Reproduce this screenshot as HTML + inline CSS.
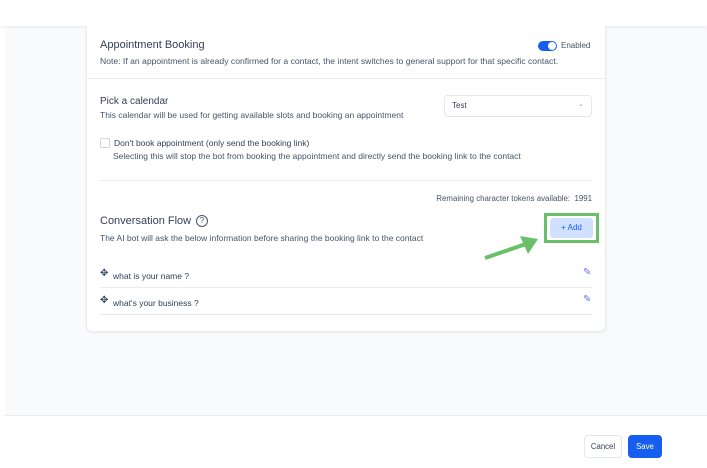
<!DOCTYPE html>
<html><head><style>
*{box-sizing:border-box;margin:0;padding:0}
body{width:707px;height:468px;background:#fff;font-family:"Liberation Sans",sans-serif;position:relative;overflow:hidden;color:#344054}
.abs{position:absolute}
.t{position:absolute;white-space:nowrap}
.s{font-size:8.5px;color:#475467}
</style></head><body>
<div class="abs" style="left:5px;top:26px;width:702px;height:390px;background:#f9fafb;border-bottom:1px solid #eaecf0"></div>
<div class="abs" style="left:0;top:0;width:707px;height:26px;background:#fff;box-shadow:0 1px 3px rgba(0,0,0,0.08)"></div>
<div class="abs" style="left:86px;top:26px;width:520px;height:306px;background:#fff;border:1px solid #eaecf0;border-top:none;border-radius:0 0 6px 6px;box-shadow:0 1px 2px rgba(0,0,0,0.06)"></div>
<div class="abs" style="left:87px;top:78px;width:518px;height:1px;background:#eaecf0"></div>
<div class="t" style="left:100px;top:39px;font-size:11px;color:#344054">Appointment Booking</div>
<div class="t s" style="left:100px;top:56px;font-size:8.6px">Note: If an appointment is already confirmed for a contact, the intent switches to general support for that specific contact.</div>
<div class="abs" style="left:538px;top:41px;width:19px;height:10px;border-radius:5px;background:#155eef"></div>
<div class="abs" style="left:548px;top:42px;width:8px;height:8px;border-radius:50%;background:#fff"></div>
<div class="t" style="left:561px;top:41px;font-size:8px;color:#475467">Enabled</div>
<div class="t" style="left:100px;top:96px;font-size:10px;color:#344054">Pick a calendar</div>
<div class="t s" style="left:100px;top:110px">This calendar will be used for getting available slots and booking an appointment</div>
<div class="abs" style="left:444px;top:95px;width:148px;height:22px;border:1px solid #e4e7ec;border-radius:4px"></div>
<div class="t" style="left:452px;top:101px;font-size:8px;color:#344054">Test</div>
<div class="t" style="left:578px;top:100px;font-size:7px;color:#98a2b3">⌄</div>
<div class="abs" style="left:100px;top:138px;width:10px;height:10px;border:1px solid #d0d5dd;border-radius:2px"></div>
<div class="t s" style="left:114px;top:138px;color:#344054">Don't book appointment (only send the booking link)</div>
<div class="t s" style="left:113px;top:151px">Selecting this will stop the bot from booking the appointment and directly send the booking link to the contact</div>
<div class="abs" style="left:100px;top:180px;width:492px;height:1px;background:#eaecf0"></div>
<div class="t s" style="right:115px;top:194px;font-size:7.9px">Remaining character tokens available:&nbsp; 1991</div>
<div class="t" style="left:100px;top:215px;font-size:11px;color:#344054">Conversation Flow</div>
<div class="abs" style="left:196px;top:215px;width:12px;height:12px;border:1px solid #475467;border-radius:50%;font-size:8px;text-align:center;line-height:10px;color:#475467">?</div>
<div class="t s" style="left:100px;top:233px">The AI bot will ask the below information before sharing the booking link to the contact</div>
<div class="abs" style="left:544px;top:213px;width:55px;height:30px;border:3px solid #6abf69;"></div>
<div class="abs" style="left:550px;top:218px;width:43px;height:20px;background:#d1e0ff;border-radius:3px;color:#155eef;font-size:8px;text-align:center;line-height:20px">+ Add</div>
<svg class="abs" style="left:482px;top:232px" width="62" height="30"><path d="M3 26 L44 12" stroke="#6abf69" stroke-width="4"/><polygon points="38,4 56,7 46,22" fill="#6abf69"/></svg>
<div class="t" style="left:100px;top:268px;font-size:10px;color:#344054">✥</div>
<div class="t s" style="left:113px;top:271px;color:#344054">what is your name ?</div>
<div class="t" style="left:583px;top:267px;font-size:10px;color:#6172f3">✎</div>
<div class="abs" style="left:100px;top:287px;width:492px;height:1px;background:#eaecf0"></div>
<div class="t" style="left:100px;top:295px;font-size:10px;color:#344054">✥</div>
<div class="t s" style="left:113px;top:298px;color:#344054">what's your business ?</div>
<div class="t" style="left:583px;top:294px;font-size:10px;color:#6172f3">✎</div>
<div class="abs" style="left:100px;top:314px;width:492px;height:1px;background:#eaecf0"></div>
<div class="abs" style="left:584px;top:435px;width:38px;height:23px;border:1px solid #e4e7ec;border-radius:4px;font-size:7.8px;text-align:center;line-height:21px;color:#344054">Cancel</div>
<div class="abs" style="left:628px;top:435px;width:34px;height:23px;background:#155eef;border-radius:4px;font-size:7.8px;text-align:center;line-height:23px;color:#fff">Save</div>
</body></html>
